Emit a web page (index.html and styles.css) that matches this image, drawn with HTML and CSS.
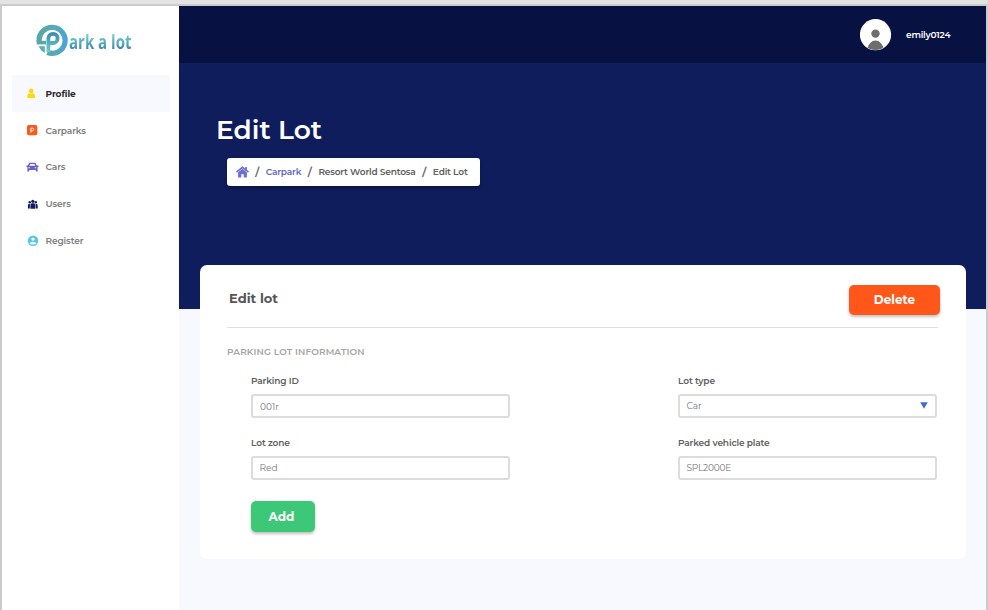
FILE: index.html
```html
<!DOCTYPE html>
<html lang="en">
<head>
<meta charset="utf-8">
<title>Edit Lot</title>
<link rel="stylesheet" href="styles.css">
</head>
<body>
<div class="app">
  <aside class="sidebar">
    <div class="logo">
      <svg class="logo-mark" viewBox="0 0 32 32">
        <defs><linearGradient id="lg"><stop offset="0" stop-color="#58a7a7"/><stop offset=".6" stop-color="#5aa9b5"/><stop offset="1" stop-color="#4aa3d8"/></linearGradient>
        <linearGradient id="lp" x1="0" y1="0" x2="0" y2="1"><stop offset="0" stop-color="#3d8fb0"/><stop offset="1" stop-color="#70cdd2"/></linearGradient></defs>
        <path d="M3.2 18A13 13 0 1 1 11.5 28.5Q13 29.2 16 29.2" fill="none" stroke="url(#lg)" stroke-width="5.2"/>
        <path d="M.7 18.6H10" fill="none" stroke="#58a7a7" stroke-width="3.6"/>
        <path d="M2.7 22.3H8.8V29C6 27.5 3.9 25.2 2.7 22.3Z" fill="#5bb0b4"/>
        <path d="M12.4 28V14.3A4.6 4.6 0 1 1 17 19H14" fill="none" stroke="url(#lp)" stroke-width="3.8"/>
      </svg>
      <span class="logo-text">ark a lot</span>
    </div>
    <nav class="menu">
      <a class="item active"><svg class="ico" viewBox="0 0 12 12"><circle cx="5.2" cy="3.9" r="2.3" fill="#ffd900"/><path d="M1.3 10.9V9.2Q1.3 6.5 4 6.5Q5.2 7.2 6.4 6.5Q9 6.5 9 9.2V10.9Z" fill="#ffd900"/></svg><span>Profile</span></a>
      <a class="item"><svg class="ico" viewBox="0 0 12 12"><rect x="1" y=".9" width="10.3" height="10.3" rx="1.8" fill="#ff5719"/><path d="M4.9 8.5V4.1H6.4A1.35 1.35 0 0 1 6.4 6.8H4.9" fill="none" stroke="#fff" stroke-width="1"/></svg><span>Carparks</span></a>
      <a class="item"><svg class="ico" viewBox="0 0 12 12"><path d="M.4 4.6H1.9L3 2.1Q3.2 1.7 3.7 1.7H8.9Q9.4 1.7 9.6 2.1L10.7 4.6H12.5V5.9H11.6V10.5H9.8V9.1H3.2V10.5H1.4V5.9H.4ZM3.4 4.7H9.2L8.4 3H4.2ZM2.5 6.2V7.3H3.9V6.2ZM8.7 6.2V7.3H10.1V6.2Z" fill="#6b5fcb" fill-rule="evenodd"/></svg><span>Cars</span></a>
      <a class="item"><svg class="ico" viewBox="0 0 12 12"><g fill="#151c63"><circle cx="6.8" cy="3.3" r="1.6"/><circle cx="3.7" cy="4.2" r="1.2"/><circle cx="9.8" cy="4.2" r="1.2"/><path d="M4.4 10.7V6.8Q4.4 5.2 5.8 5.2H7.8Q9.2 5.2 9.2 6.8V10.7ZM1.9 10.4V7.2Q1.9 5.9 3.1 5.9H3.9V10.4ZM9.7 10.4V5.9H10.5Q11.7 5.9 11.7 7.2V10.4Z"/></g></svg><span>Users</span></a>
      <a class="item"><svg class="ico" viewBox="0 0 12 12"><circle cx="7" cy="6.7" r="5.2" fill="#54c6ed"/><circle cx="7" cy="5.1" r="1.7" fill="#fff"/><path d="M3.7 9.3Q4.1 7.7 7 7.7Q9.9 7.7 10.3 9.3Q9.1 10.5 7 10.5Q4.9 10.5 3.7 9.3Z" fill="#fff"/></svg><span>Register</span></a>
    </nav>
  </aside>
  <main class="main">
    <header class="topbar">
      <svg class="avatar" viewBox="0 0 32 32"><clipPath id="av"><circle cx="15.5" cy="15.7" r="15.2"/></clipPath><circle cx="15.5" cy="15.7" r="15.6" fill="#fff"/><circle cx="15.5" cy="14.6" r="4.2" fill="#6e6e6e"/><path clip-path="url(#av)" d="M6.5 32Q9 21.5 15.5 21.5Q22 21.5 24.5 32Z" fill="#6e6e6e"/></svg>
      <span class="username">emily0124</span>
    </header>
    <section class="hero">
      <h1>Edit Lot</h1>
      <div class="crumbs">
        <svg class="home" viewBox="0 0 13 12"><path d="M.5 6.2L6.5 1.3L12.5 6.2" fill="none" stroke="#6b70cf" stroke-width="1.6"/><path d="M9.2 1H10.9V4.5H9.2ZM2.1 6.4L6.5 2.8L10.9 6.4V11.5H7.7V8.3H5.3V11.5H2.1Z" fill="#6b70cf"/></svg>
        <i>/</i><a>Carpark</a><i>/</i><span>Resort World Sentosa</span><i>/</i><span>Edit Lot</span>
      </div>
    </section>
    <section class="card">
      <div class="card-head"><h2>Edit lot</h2><button class="btn delete">Delete</button></div>
      <h3>PARKING LOT INFORMATION</h3>
      <div class="fields">
        <div class="field"><label>Parking ID</label><div class="input low"><span>001r</span></div></div>
        <div class="field"><label>Lot type</label><div class="input"><span>Car</span><svg class="caret" viewBox="0 0 8 7"><path d="M.2.3H7.8L4 6.8Z" fill="#4169d8"/></svg></div></div>
        <div class="field"><label>Lot zone</label><div class="input"><span>Red</span></div></div>
        <div class="field"><label>Parked vehicle plate</label><div class="input"><span class="plate">SPL2000E</span></div></div>
      </div>
      <button class="btn add">Add</button>
    </section>
  </main>
</div>
</body>
</html>
```
FILE: styles.css
```css
* { box-sizing: border-box; }
body {
  margin: 0;
  padding-top: 4px;
  height: 610px;
  overflow: hidden;
  background: #e3e3e3;
  font-family: Montserrat, Inter, sans-serif;
}
.app {
  display: flex;
  height: 606px;
  border: 2px solid #cbcbcb;
  border-bottom: 0;
  background: #f8f8ff;
}
.sidebar { width: 177px; background: #fff; flex: none; }
.logo { display: flex; height: 69px; padding: 18px 0 0 34px; }
.logo-mark { width: 32px; height: 32px; flex: none; }
.logo-text {
  font: bold 19px/36px "Open Sans", sans-serif;
  height: 36px;
  margin-left: .5px;
  white-space: nowrap;
  transform: scaleX(.79);
  transform-origin: left;
  background: linear-gradient(#7cd6d6 25%, #3581a8 75%);
  -webkit-background-clip: text;
  background-clip: text;
  color: transparent;
}
.menu { padding: 0 9px 0 10px; }
.item {
  display: flex;
  align-items: center;
  height: 36.75px;
  padding-left: 14px;
  font-size: 9px;
  font-weight: 600;
  color: #7d7d7d;
  letter-spacing: -.1px;
}
.item.active { background: #f8f8ff; color: #2c2c2c; font-weight: 700; }
.ico { width: 12px; height: 12px; margin-right: 7.5px; flex: none; overflow: visible; }
.main { flex: 1; min-width: 0; }
.topbar { display: flex; align-items: center; height: 57px; background: #071142; padding-left: 681px; color: #fff; }
.avatar { width: 32px; height: 32px; margin-right: 14px; }
.username { font-size: 9px; font-weight: 600; letter-spacing: -.2px; }
.hero { height: 246px; background: #0f1d5c; padding: 49px 0 0 37px; }
h1, h2, h3 { margin: 0; white-space: nowrap; }
h1 { font-size: 26.5px; line-height: 36px; font-weight: 600; color: #fff; }
.crumbs {
  display: flex;
  align-items: center;
  width: 253px;
  height: 28.5px;
  margin: 9.5px 0 0 10.5px;
  padding-left: 9px;
  background: #fff;
  border-radius: 3px;
  box-shadow: 0 2px 3px rgba(0,0,0,.3);
  font-size: 9px;
  font-weight: 600;
  color: #606060;
  letter-spacing: -.16px;
  white-space: nowrap;
}
.crumbs a { color: #6469c9; }
.crumbs i { font-style: normal; font-size: 11px; width: 17.2px; text-align: center; }
.home { width: 13px; height: 12px; }
.card {
  position: relative;
  width: 766px;
  height: 294px;
  margin: -44.5px 0 0 21px;
  padding: 0 28.5px 0 27px;
  background: #fff;
  border-radius: 7px;
}
.card-head { display: flex; justify-content: space-between; height: 63.5px; padding: 20px 0 0 2px; border-bottom: 1.5px solid #dfdfdf; }
h2 { font-size: 13px; line-height: 27px; font-weight: 700; color: #555; }
.btn {
  display: block;
  height: 30.5px;
  padding: 0;
  border: 0;
  border-radius: 5px;
  color: #fff;
  font: 700 12px/30px Montserrat, Inter, sans-serif;
  box-shadow: 0 2px 3px rgba(0,0,0,.25);
}
.delete { width: 91px; margin-right: -2px; padding-left: 1px; background: #ff5719; }
.add { width: 64.5px; margin: 21px 0 0 23.7px; padding: 1px 3px 0 0; background: #3dc878; }
h3 { font-size: 9px; line-height: 12px; margin-top: 18px; font-weight: 600; color: #a5a5a5; letter-spacing: .14px; }
.fields { display: grid; grid-template-columns: 258.5px 259px; column-gap: 168.5px; row-gap: 19px; margin: 17px 0 0 24px; }
.field { height: 43px; }
label { display: block; font-size: 9px; line-height: 12px; font-weight: 600; color: #606060; letter-spacing: -.13px; white-space: nowrap; }
.input {
  display: flex;
  align-items: center;
  justify-content: space-between;
  height: 24px;
  margin-top: 7px;
  padding: 0 7px 1px 6.5px;
  border: 2px solid #dcdcdc;
  border-radius: 3px;
  font-size: 9px;
  color: #777;
}
.low { padding: 1px 7px 0; }
.plate { letter-spacing: -.2px; }
.caret { width: 8px; height: 7px; }
```
